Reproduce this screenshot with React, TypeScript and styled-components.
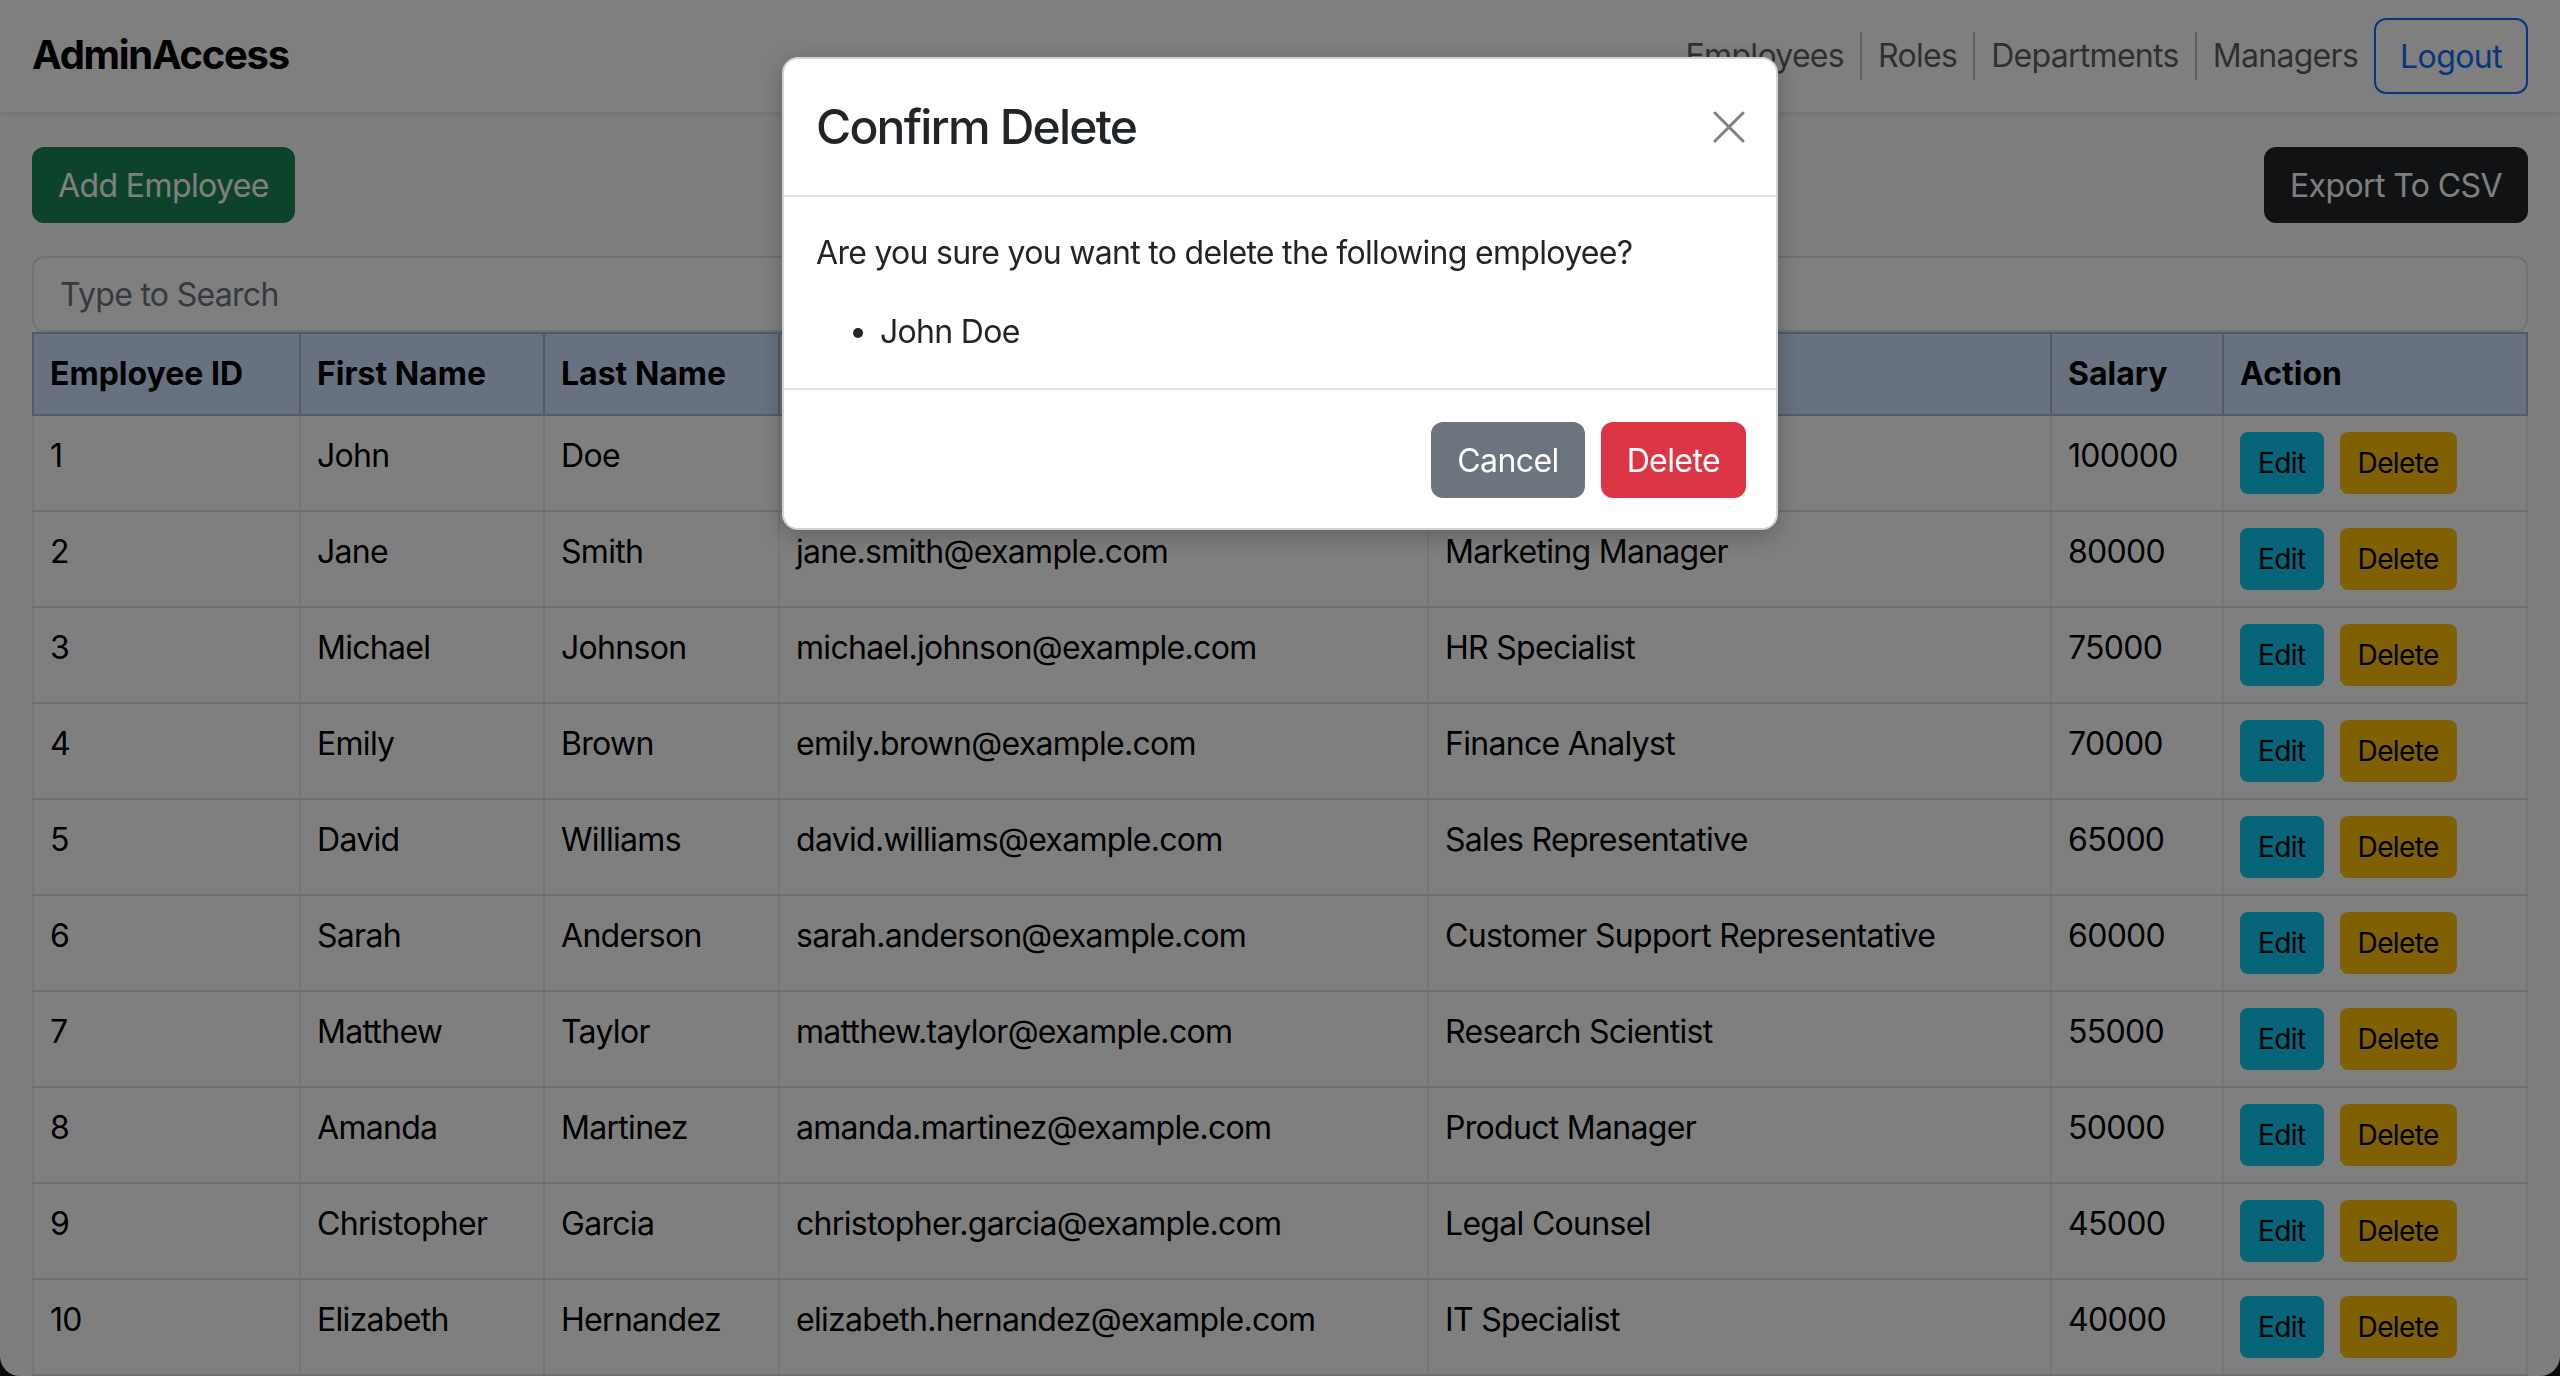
import { styled, createGlobalStyle } from 'styled-components'

type Employee = {
  id: number
  firstName: string
  lastName: string
  email: string
  role: string
  salary: number
}

const employees: Employee[] = [
  { id: 1, firstName: 'John', lastName: 'Doe', email: 'john.doe@example.com', role: 'Software Engineer', salary: 100000 },
  { id: 2, firstName: 'Jane', lastName: 'Smith', email: 'jane.smith@example.com', role: 'Marketing Manager', salary: 80000 },
  { id: 3, firstName: 'Michael', lastName: 'Johnson', email: 'michael.johnson@example.com', role: 'HR Specialist', salary: 75000 },
  { id: 4, firstName: 'Emily', lastName: 'Brown', email: 'emily.brown@example.com', role: 'Finance Analyst', salary: 70000 },
  { id: 5, firstName: 'David', lastName: 'Williams', email: 'david.williams@example.com', role: 'Sales Representative', salary: 65000 },
  { id: 6, firstName: 'Sarah', lastName: 'Anderson', email: 'sarah.anderson@example.com', role: 'Customer Support Representative', salary: 60000 },
  { id: 7, firstName: 'Matthew', lastName: 'Taylor', email: 'matthew.taylor@example.com', role: 'Research Scientist', salary: 55000 },
  { id: 8, firstName: 'Amanda', lastName: 'Martinez', email: 'amanda.martinez@example.com', role: 'Product Manager', salary: 50000 },
  { id: 9, firstName: 'Christopher', lastName: 'Garcia', email: 'christopher.garcia@example.com', role: 'Legal Counsel', salary: 45000 },
  { id: 10, firstName: 'Elizabeth', lastName: 'Hernandez', email: 'elizabeth.hernandez@example.com', role: 'IT Specialist', salary: 40000 },
]

const columns = [
  { label: 'Employee ID', width: 267 },
  { label: 'First Name', width: 244 },
  { label: 'Last Name', width: 235 },
  { label: 'Email', width: 649 },
  { label: 'Role', width: 623 },
  { label: 'Salary', width: 172 },
  { label: 'Action' },
]

const navItems = ['Employees', 'Roles', 'Departments', 'Managers']

export default function App() {
  return (
    <>
      <GlobalStyle />
      <Page>
        <NavBar>
          <Brand>AdminAccess</Brand>
          <NavLinks>
            {navItems.map((item, i) => (
              <NavItem key={item}>
                {i > 0 && <Divider />}
                <NavLink>{item}</NavLink>
              </NavItem>
            ))}
            <Button $variant="outline" $size="md">Logout</Button>
          </NavLinks>
        </NavBar>

        <Main>
          <Toolbar>
            <Button $variant="success" $size="md">Add Employee</Button>
            <Button $variant="dark" $size="md">Export To CSV</Button>
          </Toolbar>

          <SearchInput placeholder="Type to Search" readOnly />

          <Table>
            <colgroup>
              {columns.map((c) => (
                <col key={c.label} style={c.width ? { width: c.width } : undefined} />
              ))}
            </colgroup>
            <thead>
              <tr>
                {columns.map((c) => (
                  <Th key={c.label}>{c.label}</Th>
                ))}
              </tr>
            </thead>
            <tbody>
              {employees.map((e) => (
                <tr key={e.id}>
                  <Td>{e.id}</Td>
                  <Td>{e.firstName}</Td>
                  <Td>{e.lastName}</Td>
                  <Td>{e.email}</Td>
                  <Td>{e.role}</Td>
                  <Td>{e.salary}</Td>
                  <Td>
                    <Actions>
                      <Button $variant="info" $size="sm">Edit</Button>
                      <Button $variant="warning" $size="sm">Delete</Button>
                    </Actions>
                  </Td>
                </tr>
              ))}
            </tbody>
          </Table>
        </Main>
      </Page>

      <Backdrop />
      <ModalLayer>
        <Modal>
          <ModalHeader>
            <ModalTitle>Confirm Delete</ModalTitle>
            <CloseButton aria-label="Close">
              <svg width="32" height="32" viewBox="0 0 32 32">
                <path d="M2 2 L30 30 M30 2 L2 30" stroke="currentColor" strokeWidth="3" strokeLinecap="round" />
              </svg>
            </CloseButton>
          </ModalHeader>
          <ModalBody>
            <Question>Are you sure you want to delete the following employee?</Question>
            <NameList>
              <li>John Doe</li>
            </NameList>
          </ModalBody>
          <ModalFooter>
            <Button $variant="secondary" $size="md">Cancel</Button>
            <Button $variant="danger" $size="md">Delete</Button>
          </ModalFooter>
        </Modal>
      </ModalLayer>
    </>
  )
}

const GlobalStyle = createGlobalStyle`
  html, body {
    margin: 0;
    padding: 0;
    background: #1c1212;
    overflow: hidden;
  }
  body {
    font-family: Inter, 'Noto Sans', sans-serif;
    font-size: 32px;
    line-height: 48px;
    letter-spacing: -0.7px;
    color: #212529;
  }
  * { box-sizing: border-box; }
`

const Page = styled.div`
  height: 100vh;
  overflow: hidden;
  background: #fdfdfe;
  border-radius: 0 0 20px 20px;
`

const NavBar = styled.nav`
  height: 114px;
  padding: 0 32px;
  display: flex;
  align-items: center;
  justify-content: space-between;
  background: #fff;
  border-bottom: 2px solid #ececec;
  box-shadow: 0 2px 6px rgba(0, 0, 0, 0.05);
`

const Brand = styled.div`
  font-size: 40px;
  font-weight: 700;
  color: #000;
  letter-spacing: -1.3px;
  margin-top: -2px;
`

const NavLinks = styled.div`
  display: flex;
  align-items: center;
`

const NavItem = styled.div`
  display: flex;
  align-items: center;
`

const Divider = styled.span`
  width: 2px;
  height: 48px;
  background: rgba(0, 0, 0, 0.25);
`

const NavLink = styled.a`
  padding: 0 16px;
  color: rgba(0, 0, 0, 0.65);
  font-size: 32px;
  line-height: 48px;
  letter-spacing: -0.7px;
  cursor: pointer;
`

type Variant = 'outline' | 'success' | 'dark' | 'info' | 'warning' | 'secondary' | 'danger'

const palette: Record<Variant, { bg: string; fg: string; border: string }> = {
  outline: { bg: 'transparent', fg: '#0d6efd', border: '#0d6efd' },
  success: { bg: '#198754', fg: '#fff', border: '#198754' },
  dark: { bg: '#212529', fg: '#fff', border: '#212529' },
  info: { bg: '#0dcaf0', fg: '#000', border: '#0dcaf0' },
  warning: { bg: '#ffc107', fg: '#000', border: '#ffc107' },
  secondary: { bg: '#6c757d', fg: '#fff', border: '#6c757d' },
  danger: { bg: '#dc3545', fg: '#fff', border: '#dc3545' },
}

const Button = styled.button<{ $variant: Variant; $size: 'sm' | 'md' }>`
  font-family: inherit;
  letter-spacing: -0.6px;
  display: inline-flex;
  align-items: center;
  justify-content: center;
  white-space: nowrap;
  cursor: pointer;
  background: ${({ $variant }) => palette[$variant].bg};
  color: ${({ $variant }) => palette[$variant].fg};
  border: 2px solid ${({ $variant }) => palette[$variant].border};
  height: ${({ $size }) => ($size === 'sm' ? '62px' : '76px')};
  padding: ${({ $size }) => ($size === 'sm' ? '0 16px' : '0 24px')};
  font-size: ${({ $size }) => ($size === 'sm' ? '28px' : '32px')};
  border-radius: ${({ $size }) => ($size === 'sm' ? '8px' : '12px')};
`

const Main = styled.main`
  padding: 33px 32px 0;
`

const Toolbar = styled.div`
  display: flex;
  justify-content: space-between;
  align-items: center;
  margin-bottom: 33px;
`

const SearchInput = styled.input`
  display: block;
  width: 100%;
  height: 76px;
  padding: 0 26px;
  font-family: inherit;
  font-size: 32px;
  letter-spacing: inherit;
  color: #212529;
  background: #fff;
  border: 2px solid #dee2e6;
  border-radius: 12px;
  outline: none;

  &::placeholder {
    color: #6c757d;
  }
`

const Table = styled.table`
  width: 100%;
  table-layout: fixed;
  border-collapse: collapse;
  border: 2px solid #d6d9dc;
`

const Th = styled.th`
  padding: 16px;
  text-align: left;
  font-weight: 700;
  letter-spacing: 0;
  color: #000;
  background: #cfe2ff;
  border: 2px solid #a6b5cc;
  line-height: 48px;
  white-space: nowrap;
`

const Td = styled.td`
  padding: 16px;
  vertical-align: top;
  color: #000;
  background: #fff;
  border-left: 2px solid #ececed;
  border-right: 2px solid #ececed;
  border-bottom: 2px solid #d9dbde;
  line-height: 48px;
  white-space: nowrap;
`

const Actions = styled.div`
  display: flex;
  gap: 16px;
`

const Backdrop = styled.div`
  position: fixed;
  inset: 0;
  background: rgba(0, 0, 0, 0.5);
`

const ModalLayer = styled.div`
  position: fixed;
  inset: 0;
  display: flex;
  justify-content: center;
  align-items: flex-start;
  padding-top: 57px;
`

const Modal = styled.div`
  width: 996px;
  background: #fff;
  border: 2px solid rgba(0, 0, 0, 0.175);
  border-radius: 16px;
  box-shadow: 0 6px 24px rgba(0, 0, 0, 0.25);
  display: flex;
  flex-direction: column;
`

const ModalHeader = styled.div`
  height: 138px;
  padding: 0 30px 0 32px;
  display: flex;
  align-items: center;
  justify-content: space-between;
  border-bottom: 2px solid #dee2e6;
`

const ModalTitle = styled.div`
  font-size: 48px;
  line-height: 1.2;
  font-weight: 500;
  letter-spacing: -1.8px;
  color: #212529;
`

const CloseButton = styled.button`
  background: none;
  border: 0;
  padding: 0;
  width: 34px;
  height: 36px;
  display: flex;
  align-items: center;
  justify-content: center;
  color: #808080;
  cursor: pointer;
`

const ModalBody = styled.div`
  padding: 32px;
`

const Question = styled.p`
  margin: 0 0 31px;
`

const NameList = styled.ul`
  margin: 0;
  padding-left: 64px;
`

const ModalFooter = styled.div`
  display: flex;
  justify-content: flex-end;
  gap: 16px;
  padding: 32px 30px 30px;
  border-top: 2px solid #dee2e6;
`
